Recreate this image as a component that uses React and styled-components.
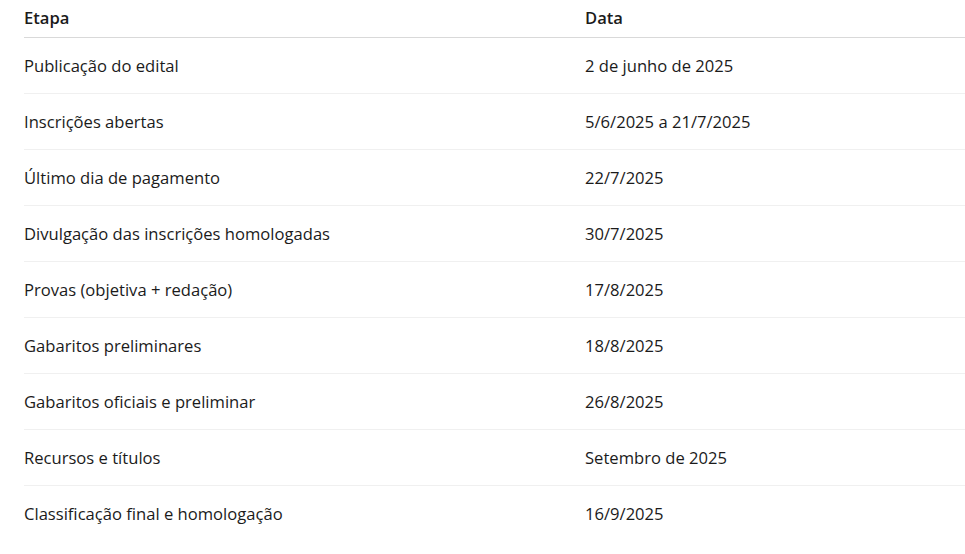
import styled, { createGlobalStyle } from 'styled-components'

const Global = createGlobalStyle`
  html, body { margin: 0; padding: 0; background: #fff; }
  body { font-family: "Open Sans", "Noto Sans", sans-serif; color: #1b1b1b; }
`

const rows = [
  ['Publicação do edital', '2 de junho de 2025'],
  ['Inscrições abertas', '5/6/2025 a 21/7/2025'],
  ['Último dia de pagamento', '22/7/2025'],
  ['Divulgação das inscrições homologadas', '30/7/2025'],
  ['Provas (objetiva + redação)', '17/8/2025'],
  ['Gabaritos preliminares', '18/8/2025'],
  ['Gabaritos oficiais e preliminar', '26/8/2025'],
  ['Recursos e títulos', 'Setembro de 2025'],
  ['Classificação final e homologação', '16/9/2025'],
]

const Wrap = styled.div`
  padding-left: 24px;
`

const Table = styled.div`
  display: flex;
  flex-direction: column;
`

const Row = styled.div`
  display: grid;
  grid-template-columns: 561px 1fr;
  align-items: center;
  height: ${p => (p.head ? '37px' : '55px')};
  border-bottom: 1px solid ${p => (p.head ? '#d9d9d9' : p.last ? 'transparent' : '#f0f0f0')};
`

const Cell = styled.div`
  font-size: 16.6px;
  line-height: 22px;
  margin-top: ${p => (p.head ? '-1px' : '0')};
  font-weight: ${p => (p.head ? 600 : 400)};
  white-space: nowrap;
`

export default function App() {
  return (
    <Wrap>
      <Global />
      <Table>
        <Row head>
          <Cell head>Etapa</Cell>
          <Cell head>Data</Cell>
        </Row>
        {rows.map(([etapa, data], i) => (
          <Row key={etapa} last={i === rows.length - 1}>
            <Cell>{etapa}</Cell>
            <Cell>{data}</Cell>
          </Row>
        ))}
      </Table>
    </Wrap>
  )
}
